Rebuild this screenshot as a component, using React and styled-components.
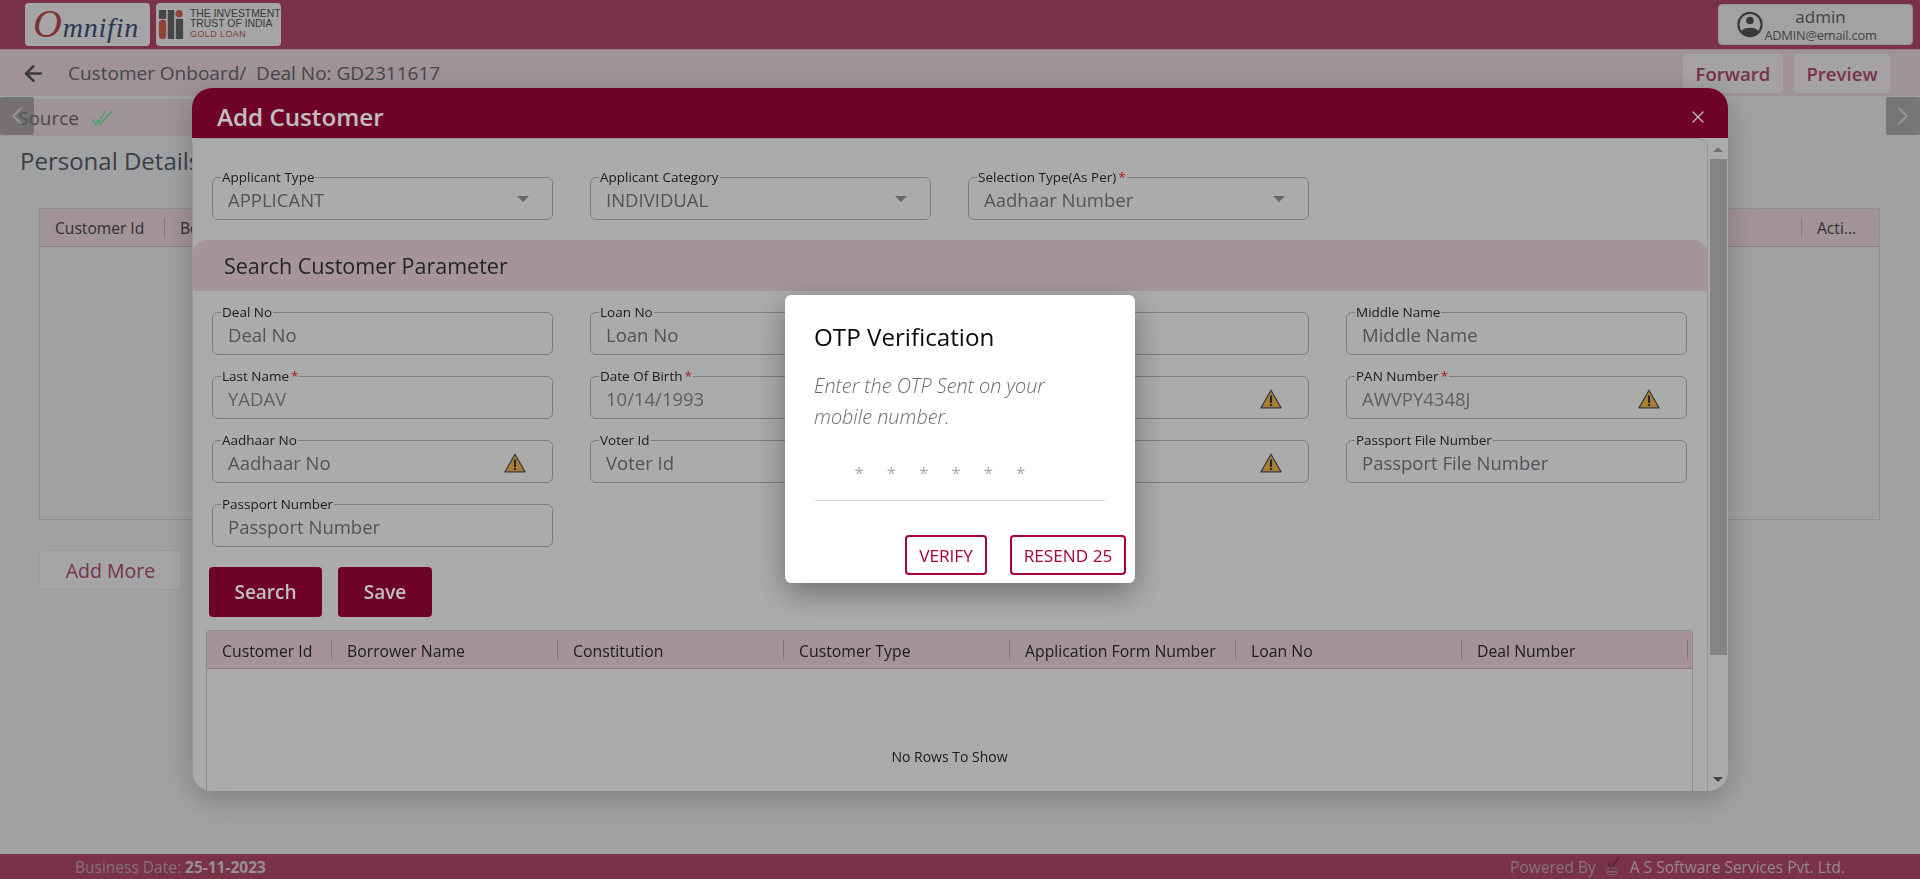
import React from 'react';
import styled, { createGlobalStyle } from 'styled-components';
import { ArrowLeft, ChevronLeft, ChevronRight, X } from 'lucide-react';

const FONT = '"Open Sans", "Noto Sans", sans-serif';

const GlobalStyle = createGlobalStyle`
  * { box-sizing: border-box; }
  html, body { margin: 0; padding: 0; height: 100%; overflow: hidden; }
  body { font-family: ${FONT}; background: #d5d7d9; }
`;

const Page = styled.div`
  height: 879px;
  display: flex;
  flex-direction: column;
  overflow: hidden;
  background: #d5d7d9;
`;

const TopBar = styled.header`
  height: 50px;
  flex: none;
  display: flex;
  align-items: center;
  justify-content: space-between;
  padding: 0 7px 1px 25px;
  background: #a24361;
  border-bottom: 1px solid #c9a9b4;
`;

const Logos = styled.div`
  display: flex;
  gap: 6px;
`;

const LogoBox = styled.div`
  width: 125px;
  height: 43px;
  border-radius: 4px;
  background: #dcdcdc;
  overflow: hidden;
  display: flex;
  align-items: center;
`;

const OmniText = styled.span`
  font-family: "Liberation Serif", serif;
  font-style: italic;
  font-size: 28px;
  color: #3a4a6e;
  letter-spacing: 0.8px;
  padding-left: 8px;
  line-height: 1;
  white-space: nowrap;
  & > b {
    font-weight: 400;
    font-size: 40px;
    color: #a8433f;
  }
`;

const TrustLogo = styled.div`
  display: flex;
  align-items: center;
  gap: 5px;
  padding-left: 1px;
`;

const TrustText = styled.div`
  font-family: "Liberation Sans", sans-serif;
  font-size: 10.4px;
  line-height: 10px;
  color: #4b4b4b;
  white-space: nowrap;
  & > em {
    display: block;
    font-style: normal;
    font-size: 9px;
    color: #b5513f;
    letter-spacing: 0.4px;
  }
`;

const UserBox = styled.div`
  width: 195px;
  height: 41px;
  border-radius: 4px;
  background: #d9d9d9;
  border: 1px solid #c4c4c4;
  display: flex;
  align-items: center;
  padding-left: 18px;
`;

const UserInfo = styled.div`
  flex: 1;
  text-align: center;
  padding-right: 34px;
  color: #5a5a5a;
  line-height: 1;
  white-space: nowrap;
`;

const UserName = styled.div`
  font-size: 17px;
  margin-top: 2px;
  margin-bottom: 4px;
`;

const UserMail = styled.div`
  font-size: 12.8px;
  letter-spacing: -0.2px;
`;

const SubBar = styled.div`
  height: 46px;
  flex: none;
  display: flex;
  align-items: center;
  padding: 0 30px 0 21px;
  background: #d4c4cb;
`;

const Crumb = styled.div`
  margin-left: 22px;
  font-size: 19px;
  color: #5c6066;
  white-space: pre;
  flex: 1;
`;

const ActionButton = styled.button`
  width: ${p => p.$w}px;
  height: 39px;
  margin-left: 11px;
  padding: 0;
  border: 0;
  border-radius: 4px;
  background: #dbd9db;
  font-family: ${FONT};
  font-size: 18.6px;
  font-weight: 600;
  color: #a24361;
`;

const TabStrip = styled.div`
  position: relative;
  height: 43px;
  flex: none;
  padding-top: 3px;
`;

const SourceTab = styled.div`
  width: 260px;
  height: 37px;
  display: flex;
  align-items: center;
  gap: 12px;
  padding-left: 18px;
  background: #d4c4cb;
  font-size: 19px;
  color: #5c6066;
`;

const ScrollArrow = styled.div`
  position: absolute;
  top: 1px;
  ${p => (p.$right ? 'right: 0;' : 'left: 0;')}
  width: 34px;
  height: 38px;
  border-radius: 2px;
  display: flex;
  align-items: center;
  justify-content: center;
  background: rgba(120, 120, 120, 0.6);
  color: #c8c8c8;
`;

const Content = styled.main`
  flex: 1;
  padding: 0 40px 0 39px;
`;

const PageTitle = styled.h2`
  margin: 6px 0 0 -19px;
  font-size: 24px;
  line-height: 32px;
  font-weight: 500;
  color: #4f555c;
  white-space: nowrap;
`;

const BackTable = styled.div`
  margin-top: 31px;
  height: 312px;
  border: 1px solid #bdbfc2;
`;

const BackHead = styled.div`
  height: 38px;
  display: flex;
  align-items: center;
  background: #d9c5cb;
  border-bottom: 1px solid #b9aab0;
  font-size: 15.6px;
  color: #3d3f44;
  & > span {
    height: 19px;
    line-height: 21px;
    padding-left: 15px;
  }
  & > span:first-child {
    width: 125px;
    border-right: 1px solid #b0a0a6;
  }
  & > span:nth-child(2) {
    flex: 1;
  }
  & > span:last-child {
    width: 78px;
    border-left: 1px solid #b0a0a6;
  }
`;

const AddMore = styled.button`
  display: block;
  margin-top: 30px;
  width: 143px;
  height: 40px;
  border: 1px solid #cfcfd2;
  border-radius: 3px;
  background: #dcdde0;
  font-family: ${FONT};
  font-size: 19.5px;
  font-weight: 500;
  color: #a24361;
`;

const Footer = styled.footer`
  height: 25px;
  flex: none;
  display: flex;
  align-items: center;
  justify-content: space-between;
  padding: 0 75px;
  background: #a24361;
  font-size: 15.5px;
  color: #b49aa4;
  & > span > b { color: #c8bfc4; font-weight: 700; }
`;

const Powered = styled.div`
  display: flex;
  align-items: center;
  & > svg { margin: 0 10px 0 9px; }
  & > b { font-weight: 400; color: #c8b7be; }
`;

const Modal = styled.section`
  position: fixed;
  left: 192px;
  top: 88px;
  width: 1536px;
  height: 703px;
  display: flex;
  flex-direction: column;
  border-radius: 20px;
  overflow: hidden;
  background: #e4e4e4;
  filter: drop-shadow(0 8px 14px rgba(0, 0, 0, 0.22));
`;

const ModalHead = styled.div`
  height: 50px;
  flex: none;
  display: flex;
  align-items: center;
  justify-content: space-between;
  padding: 7px 20px 0 25px;
  background: #940535;
  color: #fff;
`;

const ModalTitle = styled.h3`
  margin: 0;
  font-size: 24.2px;
  font-weight: 600;
`;

const ModalBody = styled.div`
  flex: 1;
  min-height: 0;
  display: flex;
`;

const ScrollPane = styled.div`
  flex: 1;
  min-width: 0;
  overflow: hidden;
  border: 1px solid #c8c8c8;
  border-bottom: 0;
  border-top-left-radius: 10px;
  border-top-right-radius: 10px;
  padding-top: 38px;
`;

const Scrollbar = styled.div`
  width: 20px;
  flex: none;
  position: relative;
  padding: 21px 1px 0 2px;
  display: flex;
  flex-direction: column;
`;

const Thumb = styled.div`
  height: 496px;
  background: #b0b0b0;
`;

const ScrollTip = styled.i`
  position: absolute;
  left: 5px;
  ${p => (p.$down ? 'bottom: 9px;' : 'top: 9px;')}
  border-left: 5px solid transparent;
  border-right: 5px solid transparent;
  ${p => (p.$down ? 'border-top: 5px solid #5a5a5a;' : 'border-bottom: 5px solid #9a9a9a;')}
`;

const FieldGrid = styled.div`
  display: grid;
  grid-template-columns: repeat(4, 341px);
  column-gap: 37px;
  row-gap: 21px;
  padding-left: 19px;
`;

const FieldBox = styled.div`
  position: relative;
  height: 43px;
  border: 1px solid #a6a6a6;
  border-radius: 6px;
  display: flex;
  align-items: center;
  justify-content: space-between;
  padding: 2px 26px 0 15px;
  font-size: 18.5px;
  white-space: nowrap;
  color: ${p => (p.$filled ? '#7c8086' : '#6a7077')};
`;

const FieldLabel = styled.label`
  position: absolute;
  left: 8px;
  top: -9px;
  padding: 0 1px;
  background: #e4e4e4;
  font-size: 13.5px;
  line-height: 16px;
  color: #26282b;
  & > i { font-style: normal; color: #d22; margin-left: 2px; }
`;

const Caret = styled.i`
  margin: -2px -3px 0 0;
  border-left: 6px solid transparent;
  border-right: 6px solid transparent;
  border-top: 6px solid #8a8a8a;
`;

const SectionBar = styled.div`
  margin: 20px 0 21px;
  height: 51px;
  display: flex;
  align-items: center;
  padding-left: 31px;
  border-radius: 14px 14px 0 0;
  background: #dcc7cc;
  font-size: 21.5px;
  font-weight: 500;
  color: #2d3035;
`;

const ButtonRow = styled.div`
  display: flex;
  gap: 16px;
  margin: 20px 0 13px 16px;
`;

const SolidButton = styled.button`
  width: ${p => p.$w}px;
  height: 50px;
  border: 0;
  border-radius: 4px;
  background: #940535;
  font-family: ${FONT};
  font-size: 19px;
  font-weight: 600;
  color: #fff;
`;

const ResultGrid = styled.div`
  margin-left: 13px;
  width: 1487px;
  border: 1px solid #b8b8b8;
  border-bottom: 0;
  border-top-left-radius: 4px;
  border-top-right-radius: 4px;
`;

const ResultHead = styled.div`
  height: 38px;
  display: grid;
  grid-template-columns: 125px repeat(6, 226px);
  align-items: center;
  background: #dcc5cc;
  border-bottom: 1px solid #b9a4ab;
`;

const HeadCell = styled.div`
  height: 19px;
  padding-left: 15px;
  border-right: 1px solid #a99aa0;
  font-size: 15.8px;
  line-height: 23px;
  font-weight: 500;
  color: #27292c;
  white-space: nowrap;
`;

const NoRows = styled.div`
  height: 150px;
  padding-top: 78px;
  text-align: center;
  font-size: 14px;
  color: #26282b;
`;

const Overlay = styled.div`
  position: fixed;
  inset: 0;
  background: rgba(0, 0, 0, 0.25);
`;

const OtpDialog = styled.div`
  position: fixed;
  left: 785px;
  top: 295px;
  width: 350px;
  height: 288px;
  padding: 24px 29px 0;
  border-radius: 6px;
  background: #fff;
  box-shadow: 0 10px 30px rgba(0, 0, 0, 0.35);
`;

const OtpTitle = styled.h4`
  margin: 0;
  font-size: 24.2px;
  line-height: 36px;
  font-weight: 500;
  color: #0a0a0a;
`;

const OtpHint = styled.p`
  margin: 15px 0 0;
  width: 280px;
  font-size: 19.8px;
  line-height: 31px;
  font-style: italic;
  font-weight: 300;
  color: #6a6a6a;
`;

const OtpInput = styled.div`
  margin: 19px 0 0 1px;
  height: 50px;
  width: 290px;
  padding: 10px 0 0 39px;
  display: flex;
  gap: 22px;
  border-bottom: 1px solid #d8d8d8;
  font-size: 17px;
  color: #a8a8a8;
  & > span { width: 10.3px; text-align: center; }
`;

const OtpActions = styled.div`
  margin: 34px -20px 0 0;
  display: flex;
  justify-content: flex-end;
  gap: 23px;
`;

const OutlineButton = styled.button`
  height: 40px;
  width: ${p => p.$w}px;
  border: 2px solid #a5033a;
  border-radius: 4px;
  background: #fff;
  padding: 0;
  font-family: ${FONT};
  font-size: 17.2px;
  font-weight: 500;
  color: #a5033a;
  white-space: nowrap;
`;

const WarnIcon = () => (
  <svg width="22" height="20" viewBox="0 0 22 20">
    <path d="M11 1.2 L21 18.8 H1 Z" fill="#e2a83e" stroke="#4a5060" strokeWidth="1.3" strokeLinejoin="round" />
    <rect x="10" y="6.5" width="2" height="7.5" fill="#2d3448" />
    <rect x="10" y="15" width="2" height="2" fill="#2d3448" />
  </svg>
);

const UserIcon = () => (
  <svg width="26" height="31" viewBox="0 0 26 31">
    <circle cx="13" cy="15.5" r="11.6" fill="none" stroke="#4d4d4d" strokeWidth="2.2" />
    <circle cx="13" cy="11.5" r="3.8" fill="#4d4d4d" />
    <path d="M4.5 22 C7 17.5 19 17.5 21.5 22 C18 28 8 28 4.5 22 Z" fill="#4d4d4d" />
  </svg>
);

const DoubleTick = () => (
  <svg width="22" height="16" viewBox="0 0 22 16" fill="none" stroke="#52d988" strokeWidth="1.2">
    <path d="M1 9 L5 15 L15 1" />
    <path d="M6 10 L8.5 13" />
    <path d="M8 15 L21 1" />
  </svg>
);

const TrustMark = () => (
  <svg width="28" height="29" viewBox="0 0 32 36">
    <rect x="1" y="0" width="9" height="11" fill="#5e5e5e" />
    <rect x="1" y="12" width="9" height="24" rx="4.5" fill="#c05a4c" />
    <rect x="12" y="0" width="8" height="36" fill="#5e5e5e" />
    <circle cx="26" cy="4.5" r="4.5" fill="#c05a4c" />
    <rect x="22" y="11" width="9" height="25" fill="#5e5e5e" />
  </svg>
);

const FootMark = () => (
  <svg width="15" height="21" viewBox="0 0 15 21" fill="none">
    <path d="M3 7 L6.5 12 L14 1" stroke="#55303e" strokeWidth="1.3" />
    <ellipse cx="7" cy="14" rx="6" ry="2.2" stroke="#a88a95" />
    <ellipse cx="7" cy="17" rx="5" ry="1.7" stroke="#a88a95" />
  </svg>
);

const topFields = [
  { label: 'Applicant Type', value: 'APPLICANT' },
  { label: 'Applicant Category', value: 'INDIVIDUAL' },
  { label: 'Selection Type(As Per)', value: 'Aadhaar Number', required: true },
];

// the third column sits behind the OTP dialog, only its box and warning show
const searchFields = [
  { id: 'deal', label: 'Deal No', value: 'Deal No' },
  { id: 'loan', label: 'Loan No', value: 'Loan No' },
  { id: 'c3r1' },
  { id: 'middle', label: 'Middle Name', value: 'Middle Name' },
  { id: 'last', label: 'Last Name', value: 'YADAV', required: true, filled: true },
  { id: 'dob', label: 'Date Of Birth', value: '10/14/1993', required: true, filled: true },
  { id: 'c3r2', warn: true },
  { id: 'pan', label: 'PAN Number', value: 'AWVPY4348J', required: true, filled: true, warn: true },
  { id: 'aadhaar', label: 'Aadhaar No', value: 'Aadhaar No', warn: true },
  { id: 'voter', label: 'Voter Id', value: 'Voter Id' },
  { id: 'c3r3', warn: true },
  { id: 'file', label: 'Passport File Number', value: 'Passport File Number' },
  { id: 'passport', label: 'Passport Number', value: 'Passport Number' },
];

const columns = [
  'Customer Id',
  'Borrower Name',
  'Constitution',
  'Customer Type',
  'Application Form Number',
  'Loan No',
  'Deal Number',
];

const Field = ({ label, value, required, filled, warn, select }) => (
  <FieldBox $filled={filled}>
    {label && (
      <FieldLabel>
        {label}
        {required && <i>*</i>}
      </FieldLabel>
    )}
    <span>{value}</span>
    {warn && <WarnIcon />}
    {select && <Caret />}
  </FieldBox>
);

export default function App() {
  return (
    <>
      <GlobalStyle />
      <Page>
        <TopBar>
          <Logos>
            <LogoBox>
              <OmniText>
                <b>O</b>mnifin
              </OmniText>
            </LogoBox>
            <LogoBox>
              <TrustLogo>
                <TrustMark />
                <TrustText>
                  THE INVESTMENT
                  <br />
                  TRUST OF INDIA
                  <em>GOLD LOAN</em>
                </TrustText>
              </TrustLogo>
            </LogoBox>
          </Logos>
          <UserBox>
            <UserIcon />
            <UserInfo>
              <UserName>admin</UserName>
              <UserMail>ADMIN@email.com</UserMail>
            </UserInfo>
          </UserBox>
        </TopBar>
        <SubBar>
          <ArrowLeft size={25} strokeWidth={2.4} color="#4d4d52" />
          <Crumb>Customer Onboard/  Deal No: GD2311617</Crumb>
          <ActionButton $w={100}>Forward</ActionButton>
          <ActionButton $w={96}>Preview</ActionButton>
        </SubBar>
        <TabStrip>
          <SourceTab>
            Source
            <DoubleTick />
          </SourceTab>
          <ScrollArrow>
            <ChevronLeft size={30} strokeWidth={1.5} />
          </ScrollArrow>
          <ScrollArrow $right>
            <ChevronRight size={30} strokeWidth={1.5} />
          </ScrollArrow>
        </TabStrip>
        <Content>
          <PageTitle>Personal Details</PageTitle>
          <BackTable>
            <BackHead>
              <span>Customer Id</span>
              <span>Borrower Name</span>
              <span>Acti...</span>
            </BackHead>
          </BackTable>
          <AddMore>Add More</AddMore>
        </Content>
        <Footer>
          <span>
            Business Date: <b>25-11-2023</b>
          </span>
          <Powered>
            Powered By
            <FootMark />
            <b>A S Software Services Pvt. Ltd.</b>
          </Powered>
        </Footer>
      </Page>

      <Modal>
        <ModalHead>
          <ModalTitle>Add Customer</ModalTitle>
          <X size={20} strokeWidth={1.5} />
        </ModalHead>
        <ModalBody>
          <ScrollPane>
            <FieldGrid>
              {topFields.map(f => (
                <Field key={f.label} {...f} select />
              ))}
            </FieldGrid>
            <SectionBar>Search Customer Parameter</SectionBar>
            <FieldGrid>
              {searchFields.map(({ id, ...f }) => (
                <Field key={id} {...f} />
              ))}
            </FieldGrid>
            <ButtonRow>
              <SolidButton $w={113}>Search</SolidButton>
              <SolidButton $w={94}>Save</SolidButton>
            </ButtonRow>
            <ResultGrid>
              <ResultHead>
                {columns.map(c => (
                  <HeadCell key={c}>{c}</HeadCell>
                ))}
              </ResultHead>
              <NoRows>No Rows To Show</NoRows>
            </ResultGrid>
          </ScrollPane>
          <Scrollbar>
            <ScrollTip />
            <Thumb />
            <ScrollTip $down />
          </Scrollbar>
        </ModalBody>
      </Modal>

      <Overlay />

      <OtpDialog>
        <OtpTitle>OTP Verification</OtpTitle>
        <OtpHint>Enter the OTP Sent on your mobile number.</OtpHint>
        <OtpInput>
          {[0, 1, 2, 3, 4, 5].map(i => (
            <span key={i}>*</span>
          ))}
        </OtpInput>
        <OtpActions>
          <OutlineButton $w={82}>VERIFY</OutlineButton>
          <OutlineButton $w={116}>RESEND 25</OutlineButton>
        </OtpActions>
      </OtpDialog>
    </>
  );
}
